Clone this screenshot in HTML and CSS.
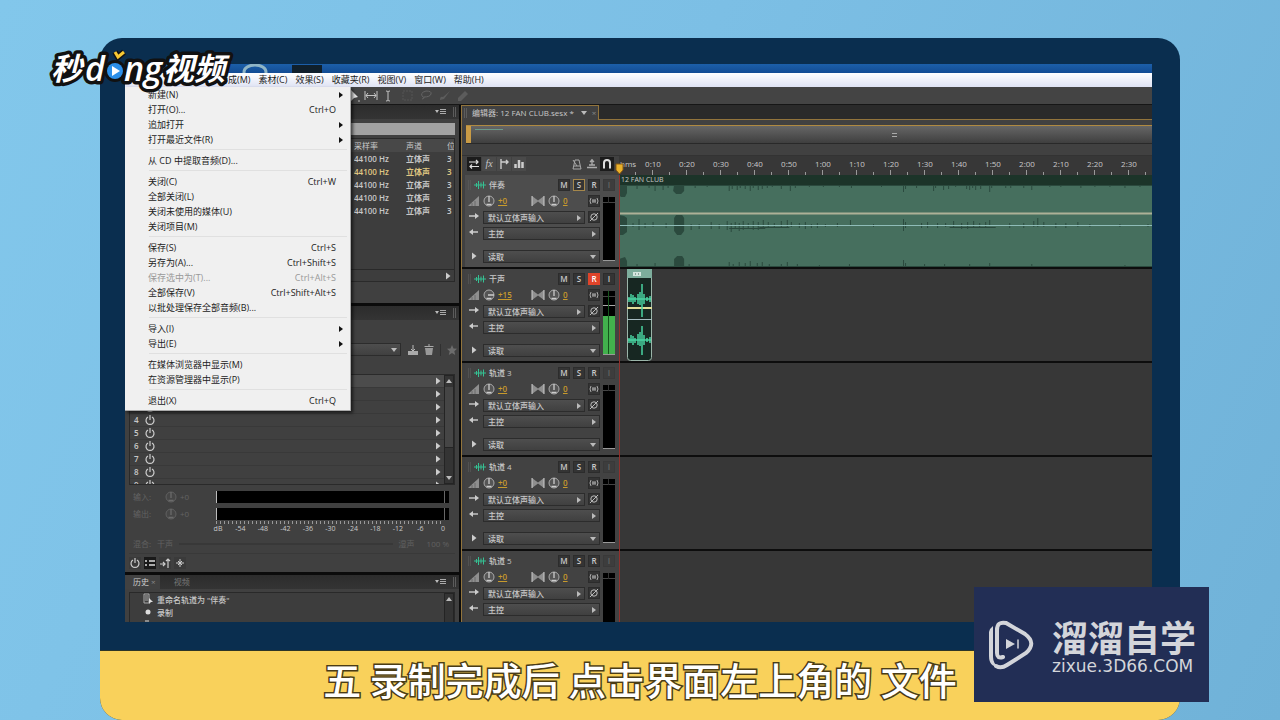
FILE: index.html
```html
<!DOCTYPE html>
<html lang="zh-CN">
<head>
<meta charset="utf-8">
<title>秒dong视频</title>
<link rel="stylesheet" href="styles.css">
</head>
<body>
<svg class="defs" aria-hidden="true">
  <symbol id="wave" viewBox="0 0 12 12"><path d="M0 6h12M2.500 4v4M4.500 2v8M7 3.500v5M9.500 2.500v7" stroke="#35c193" stroke-width="1" fill="none"/></symbol>
  <symbol id="ramp" viewBox="0 0 12 12"><path d="M0 11L11 1v10z" fill="#8f8f8f"/><path d="M4 11V8M7 11V6" stroke="#6a6a6a"/></symbol>
  <symbol id="knob" viewBox="0 0 12 12"><circle cx="6" cy="6" r="5" fill="#555" stroke="#aaa"/><path d="M6 1v6M3.500 9.500h5" stroke="#ccc" stroke-width="1.300"/></symbol>
  <symbol id="knobup" viewBox="0 0 12 12"><circle cx="6" cy="6" r="5" fill="#555" stroke="#aaa"/><path d="M5 6h6M3.500 9.500h5" stroke="#ccc" stroke-width="1.300"/></symbol>
  <symbol id="pan" viewBox="0 0 14 12"><path d="M1 1v10l6-4.500L13 11V1L7 5.500z" fill="#8f8f8f"/><path d="M1 1v10M13 1v10" stroke="#ccc"/></symbol>
  <symbol id="mono" viewBox="0 0 12 12"><path d="M3 3Q1 6 3 9M9 3q2 3 0 6M5 4v4M7 4v4M4 6h4" stroke="#aaa" fill="none"/></symbol>
  <symbol id="phase" viewBox="0 0 12 12"><circle cx="6" cy="6" r="3.200" stroke="#bbb" fill="none"/><path d="M2 10l8-8" stroke="#bbb"/></symbol>
  <symbol id="in" viewBox="0 0 12 12"><path d="M1 5h7" stroke="#ccc" stroke-width="1.400"/><path d="M7 2l4 3-4 3z" fill="#ccc"/></symbol>
  <symbol id="out" viewBox="0 0 12 12"><path d="M10 5H4" stroke="#ccc" stroke-width="1.400"/><path d="M5 2L1 5l4 3z" fill="#ccc"/></symbol>
  <symbol id="tri" viewBox="0 0 12 12"><path d="M4 2.500v7L8.500 6z" fill="#ccc"/></symbol>
  <symbol id="power" viewBox="0 0 12 12"><path d="M4 3a4 4 0 1 0 4 0M6 1v5" stroke="#ccc" stroke-width="1.200" fill="none"/></symbol>
  <symbol id="flyout" viewBox="0 0 12 10"><path d="M0 3h4L2 6z" fill="#bbb"/><path d="M5 2.500h6M5 4.500h6M5 6.500h6" stroke="#aaa"/></symbol>
</svg>

<main class="stage">
  <div class="app">
    <div class="titlebar">
      <svg viewBox="0 0 200 9" width="200" height="9"><ellipse cx="37" cy="8" rx="11" ry="7" fill="none" stroke="#8fb5c6" stroke-width="3"/><path d="M74 1h30v8H74z" fill="#10202c"/></svg>
    </div>
    <nav class="menubar">
      <button>合成(M)</button><button>素材(C)</button><button>效果(S)</button><button>收藏夹(R)</button><button>视图(V)</button><button>窗口(W)</button><button>帮助(H)</button>
    </nav>
    <div class="toolbar">
      <svg viewBox="0 0 130 18" width="130" height="18" fill="none">
        <path d="M1 3l7 7-4 1-3 3z" fill="#e4e4e4"/><path d="M8 14h2" stroke="#bbb"/>
        <path d="M15 4v9M27 4v9M16 8.500h10M18 6l-2 2.500 2 2.500M24 6l2 2.500-2 2.500" stroke="#c4c4c4"/>
        <path d="M36 4q2 0 2 1 0-1 2-1M38 5v8M36 14q2 0 2-1 0 1 2 1" stroke="#c4c4c4"/>
        <path d="M53 4h9v9h-9z" stroke="#555" stroke-dasharray="2 1"/>
        <path d="M72 12q4-1 1-2-4-4 3-6 6 0 5 3-1 3-7 3" stroke="#646464"/>
        <path d="M90 13q0-4 3-3l7-6-6 8z" fill="#5c5c5c"/><path d="M108 11l7-7 3 3-7 7h-3z" fill="#5c5c5c"/>
      </svg>
    </div>

    <div class="workspace">
      <div class="left">
        <section class="panel files">
          <div class="phead"><svg class="fly"><use href="#flyout"/></svg><i class="grip"></i></div>
          <input class="search" type="text" aria-label="搜索">
          <div class="tablebox">
            <table>
              <thead><tr><th class="cname"></th><th class="crate">采样率</th><th class="cch">声道</th><th>位</th></tr></thead>
              <tbody>
                <tr><td></td><td>44100 Hz</td><td>立体声</td><td>3</td></tr>
                <tr class="active"><td></td><td>44100 Hz</td><td>立体声</td><td>3</td></tr>
                <tr><td></td><td>44100 Hz</td><td>立体声</td><td>3</td></tr>
                <tr><td></td><td>44100 Hz</td><td>立体声</td><td>3</td></tr>
                <tr><td></td><td>44100 Hz</td><td>立体声</td><td>3</td></tr>
              </tbody>
            </table>
            <div class="hscroll"><svg class="ic"><use href="#tri"/></svg></div>
          </div>
        </section>

        <section class="panel rack">
          <div class="phead"><svg class="fly"><use href="#flyout"/></svg><i class="grip"></i></div>
          <div class="preset">
            <span class="dd grow down"><select aria-label="预设"><option></option></select></span>
            <svg class="ic" viewBox="0 0 12 12"><path d="M1 7h10v4H1z" fill="#aaa"/><path d="M6 1v6M4 5l2 2 2-2" stroke="#bbb" fill="none"/></svg>
            <svg class="ic" viewBox="0 0 12 12"><path d="M2 4h8l-1 7H3z" fill="#999"/><path d="M1.500 2.500h9M5 1h2" stroke="#aaa"/></svg>
            <i class="divider"></i>
            <svg class="ic" viewBox="0 0 12 12"><path d="M6 1l1.500 3.500 3.500.3-2.700 2.400.9 3.800L6 9l-3.200 2 .9-3.800L1 4.800l3.500-.3z" fill="#6c6c6c"/></svg>
          </div>
          <div class="slots">
            <ol>
              <li class="sel"><span>1</span><svg class="ic"><use href="#power"/></svg><svg class="ic end"><use href="#tri"/></svg></li>
              <li><span>2</span><svg class="ic"><use href="#power"/></svg><svg class="ic end"><use href="#tri"/></svg></li>
              <li><span>3</span><svg class="ic"><use href="#power"/></svg><svg class="ic end"><use href="#tri"/></svg></li>
              <li><span>4</span><svg class="ic"><use href="#power"/></svg><svg class="ic end"><use href="#tri"/></svg></li>
              <li><span>5</span><svg class="ic"><use href="#power"/></svg><svg class="ic end"><use href="#tri"/></svg></li>
              <li><span>6</span><svg class="ic"><use href="#power"/></svg><svg class="ic end"><use href="#tri"/></svg></li>
              <li><span>7</span><svg class="ic"><use href="#power"/></svg><svg class="ic end"><use href="#tri"/></svg></li>
              <li><span>8</span><svg class="ic"><use href="#power"/></svg><svg class="ic end"><use href="#tri"/></svg></li>
              <li><span>9</span><svg class="ic"><use href="#power"/></svg><svg class="ic end"><use href="#tri"/></svg></li>
            </ol>
            <div class="vscroll"><i class="up"></i><i class="thumb"></i><i class="dn"></i></div>
          </div>
          <div class="io"><span class="iolabel">输入:</span><svg class="ic"><use href="#knob"/></svg><span class="ioval">+0</span><div class="bar"></div></div>
          <div class="io"><span class="iolabel">输出:</span><svg class="ic"><use href="#knob"/></svg><span class="ioval">+0</span><div class="bar"></div></div>
          <div class="ticks"></div>
          <div class="scale"><span>dB</span><span>-54</span><span>-48</span><span>-42</span><span>-36</span><span>-30</span><span>-24</span><span>-18</span><span>-12</span><span>-6</span><span>0</span></div>
          <div class="mix"><span>混合:</span><span>干声</span><i></i><span>湿声</span><span class="pct">100 %</span></div>
          <div class="rackbtns">
            <button aria-label="电源"><svg class="ic"><use href="#power"/></svg></button>
            <button class="on" aria-label="列表"><svg class="ic" viewBox="0 0 12 12"><path d="M1 4h2M5 4h6M1 8h2M5 8h6" stroke="#ddd" stroke-width="1.500"/></svg></button>
            <button aria-label="前后"><svg class="ic" viewBox="0 0 12 12"><path d="M1 7h5M4 5l2 2-2 2M9 11V3M7 4l2-2 2 2" stroke="#ccc" fill="none" stroke-width="1.200"/></svg></button>
            <button aria-label="添加"><svg class="ic" viewBox="0 0 12 12"><path d="M6 2v8M2 6h8M4 4l4 4M8 4L4 8" stroke="#ccc"/></svg></button>
          </div>
        </section>

        <section class="panel history">
          <div class="phead tabs"><button class="tab cur">历史 <small>×</small></button><button class="tab">视频</button><svg class="fly"><use href="#flyout"/></svg><i class="grip"></i></div>
          <div class="histbox">
            <ul>
              <li><svg class="ic" viewBox="0 0 12 12"><path d="M2 1h5v9H2zM3 3h3M3 5h3M3 7h3" stroke="#aaa" fill="none"/><path d="M7 5l4 4-2 0-2 2z" fill="#ddd"/></svg>重命名轨道为 "伴奏"</li>
              <li><svg class="ic" viewBox="0 0 12 12"><circle cx="6" cy="6" r="2.500" fill="#ddd"/></svg>录制</li>
              <li><svg class="ic" viewBox="0 0 12 12"><path d="M3 2h4" stroke="#ddd"/></svg></li>
            </ul>
            <div class="vscroll"><i class="up"></i></div>
          </div>
        </section>
      </div>

      <section class="editor">
        <div class="etabs"><div class="etab"><i class="grip"></i><span>编辑器: 12 FAN CLUB.sesx *</span><i class="caret"></i><button aria-label="关闭标签">×</button></div><div class="etabrest"></div></div>
        <div class="overview"><i class="edge"></i><i class="mini"></i><i class="handle"></i></div>
        <div class="timehead">
          <div class="ttools">
            <button class="on" aria-label="输入输出"><svg class="ic" viewBox="0 0 12 12"><path d="M1 4h9M8 2l2 2-2 2M11 8.500H2M4 6.500l-2 2 2 2" stroke="#ddd" fill="none" stroke-width="1.200"/></svg></button>
            <button class="fx">fx</button>
            <button aria-label="发送"><svg class="ic" viewBox="0 0 12 12"><path d="M3 1v10M3 4h7M8 2l2 2-2 2" stroke="#ccc" stroke-width="1.400" fill="none"/></svg></button>
            <button aria-label="均衡"><svg class="ic" viewBox="0 0 12 12"><path d="M2.500 10V6M6 10V2M9.500 10V4" stroke="#ccc" stroke-width="2.500"/></svg></button>
            <span class="grow"></span>
            <button class="flat" aria-label="节拍器"><svg class="ic" viewBox="0 0 12 12"><path d="M2 11l2-9h4l2 9zM3 8h6M6 8L2 2" stroke="#aaa" fill="none"/></svg></button>
            <button class="flat" aria-label="标记"><svg class="ic" viewBox="0 0 12 12"><path d="M1 9.500h10M3 7h6M6 1v6M4 4l2-2 2 2" stroke="#aaa" fill="none" stroke-width="1.400"/></svg></button>
            <button class="on" aria-label="吸附"><svg class="ic" viewBox="0 0 12 12"><path d="M3 10.500V5a3 3 0 0 1 6 0v5.500" stroke="#ddd" stroke-width="2" fill="none"/></svg></button>
          </div>
          <div class="ruler">
            <span class="hms">hms</span>
            <div class="marks"><span>0:10</span><span>0:20</span><span>0:30</span><span>0:40</span><span>0:50</span><span>1:00</span><span>1:10</span><span>1:20</span><span>1:30</span><span>1:40</span><span>1:50</span><span>2:00</span><span>2:10</span><span>2:20</span><span>2:30</span></div>
          </div>
        </div>

        <div class="tracks">
          <article class="track lit">
            <div class="thead">
              <div class="controls">
                <div class="row"><i class="grip"></i><svg class="ic"><use href="#wave"/></svg><b>伴奏</b><span class="grow"></span><button>M</button><button class="solo">S</button><button>R</button></div>
                <div class="row vol"><svg class="ic"><use href="#ramp"/></svg><svg class="ic"><use href="#knob"/></svg><em><u>+0</u></em><svg class="ic wide"><use href="#pan"/></svg><svg class="ic"><use href="#knob"/></svg><em><u>0</u></em><button aria-label="单声道"><svg class="ic"><use href="#mono"/></svg></button></div>
                <div class="row"><svg class="ic"><use href="#in"/></svg><span class="dd grow"><select aria-label="输入"><option>默认立体声输入</option></select></span><button aria-label="反相"><svg class="ic"><use href="#phase"/></svg></button></div>
                <div class="row"><svg class="ic"><use href="#out"/></svg><span class="dd grow"><select aria-label="输出"><option>主控</option></select></span></div>
                <div class="row auto"><svg class="ic"><use href="#tri"/></svg><span class="dd grow down"><select aria-label="自动化"><option>读取</option></select></span></div>
              </div>
              <div class="side"><button class="off">I</button><div class="meter"></div></div>
            </div>
            <div class="lane">
              <div class="clip">
                <div class="cliptitle">12 FAN CLUB</div>
                <svg class="clipwave" viewBox="0 0 532 82" preserveAspectRatio="none">
                  <path d="M0 0h532v82H0z" fill="#466f5e"/>
                  <path fill="#2b4a3e" d="M0 0h8v8l-2 4H2L0 10zM55 0h10v6l-3 3h-5l-3-3zM0 30l5 1 3 2v14l-4 3H0zM55 33l2-3h6l2 3v13l-3 4h-4l-3-4zM0 82V74l6-2 2 4v6zM55 82v-8l3-3h5l2 3v8z"/>
                  <path stroke="#2b4a3e" fill="none" d="M0 .5h532M18 0v4M30 0v3M36 0v6M44 0v5M49 0v3M76 0v3M88 0v2M110 0v6M113 0v4M118 0v5M121 0v3M126 0v4M131 0v6M134 0v3M139 0v5M143 0v4M148 0v3M153 0v2M162 0v4M171 0v6M176 0v3M190 0v2M204 0v2M220 0v2M232 0v3M262 0v2M284 0v7M286 0v4M297 0v3M314 0v6M316 0v3M324 0v5M329 0v4M336 0v2M347 0v4M350 0v5M353 0v3M356 0v5M361 0v4M370 0v7M372 0v3M386 0v3M391 0v3M404 0v3M412 0v5M430 0v2M441 0v2M461 0v3M475 0v2M490 0v2M505 0v3M520 0v2"/>
                  <path stroke="#2b4a3e" fill="none" d="M8 40.500h524M14 38v4M20 34v11M26 38v5M34 37v5M47 38v5M72 39v6M80 39v5M92 37v7M100 39v5M108 36v9M112 38v9M116 37v7M120 38v8M124 36v9M129 38v6M134 36v9M139 37v8M144 35v9M149 37v6M155 38v4M162 36v6M168 35v8M172 37v5M180 38v5M186 37v7M192 39v4M198 38v5M206 39v3M218 38v4M231 35v6M254 39v3M284 34v12M286 37v6M302 38v5M308 37v6M318 38v5M326 38v4M334 36v6M342 38v6M348 37v7M354 36v7M360 38v5M366 37v6M370 35v6M390 38v5M404 38v5M414 36v6M418 33v9M424 37v5M436 38v5M446 38v5M458 37v5M470 39v3M500 39v3M528 39v3"/>
                  <path stroke="#2b4a3e" d="M140 42.500h30M330 42.500h46M110 43.500h36M0 81.500h532M18 82v-3M36 82v-4M70 82v-3M110 82v-5M114 82v-3M120 82v-5M126 82v-4M131 82v-6M138 82v-4M143 82v-5M150 82v-3M162 82v-3M168 82v-5M178 82v-3M200 82v-2M230 82v-3M284 82v-7M286 82v-4M305 82v-3M325 82v-3M350 82v-3M370 82v-4M412 82v-3M505 82v-2"/>
                  <path d="M0 28.500h532" stroke="#adb197" stroke-width="2"/>
                  <path d="M0 40.500h532" stroke="#8fbcb8"/>
                </svg>
              </div>
            </div>
          </article>

          <article class="track">
            <div class="thead">
              <div class="controls">
                <div class="row"><i class="grip"></i><svg class="ic"><use href="#wave"/></svg><b>干声</b><span class="grow"></span><button>M</button><button>S</button><button class="rec">R</button></div>
                <div class="row vol"><svg class="ic"><use href="#ramp"/></svg><svg class="ic"><use href="#knobup"/></svg><em><u>+15</u></em><svg class="ic wide"><use href="#pan"/></svg><svg class="ic"><use href="#knob"/></svg><em><u>0</u></em><button aria-label="单声道"><svg class="ic"><use href="#mono"/></svg></button></div>
                <div class="row"><svg class="ic"><use href="#in"/></svg><span class="dd grow"><select aria-label="输入"><option>默认立体声输入</option></select></span><button aria-label="反相"><svg class="ic"><use href="#phase"/></svg></button></div>
                <div class="row"><svg class="ic"><use href="#out"/></svg><span class="dd grow"><select aria-label="输出"><option>主控</option></select></span></div>
                <div class="row auto"><svg class="ic"><use href="#tri"/></svg><span class="dd grow down"><select aria-label="自动化"><option>读取</option></select></span></div>
              </div>
              <div class="side"><button>I</button><div class="meter live"></div></div>
            </div>
            <div class="lane">
              <svg class="voice" viewBox="0 0 25 92" width="25" height="92">
                <rect x=".5" y=".5" width="24" height="91" rx="3" fill="#172722" stroke="#9bb5a9"/>
                <path d="M0 0h25v9H0z" fill="#7dad9c"/><path d="M6 3h8v4H6z" fill="#d5e6df"/><path d="M8 5h1M11 5h1" stroke="#44675a"/>
                <path d="M0 39h25" stroke="#e2dd98" stroke-width="2"/><path d="M0 50.500h25" stroke="#a7bdc2"/>
                <path d="M1 30h23M2 28v5M4 25v8M6 26v9M8 28v5M11 25v10M13 23v13M15 15v33M17 25v10M20 28v4M23 27v6M1 71h23M2 69v5M4 66v8M6 67v9M8 69v5M11 65v11M13 63v14M15 57v29M17 66v10M20 69v4M23 68v6" stroke="#49d3a1" stroke-width="1.500"/>
              </svg>
            </div>
          </article>

          <article class="track">
            <div class="thead">
              <div class="controls">
                <div class="row"><i class="grip"></i><svg class="ic"><use href="#wave"/></svg><b>轨道 3</b><span class="grow"></span><button>M</button><button>S</button><button>R</button></div>
                <div class="row vol"><svg class="ic"><use href="#ramp"/></svg><svg class="ic"><use href="#knob"/></svg><em><u>+0</u></em><svg class="ic wide"><use href="#pan"/></svg><svg class="ic"><use href="#knob"/></svg><em><u>0</u></em><button aria-label="单声道"><svg class="ic"><use href="#mono"/></svg></button></div>
                <div class="row"><svg class="ic"><use href="#in"/></svg><span class="dd grow"><select aria-label="输入"><option>默认立体声输入</option></select></span><button aria-label="反相"><svg class="ic"><use href="#phase"/></svg></button></div>
                <div class="row"><svg class="ic"><use href="#out"/></svg><span class="dd grow"><select aria-label="输出"><option>主控</option></select></span></div>
                <div class="row auto"><svg class="ic"><use href="#tri"/></svg><span class="dd grow down"><select aria-label="自动化"><option>读取</option></select></span></div>
              </div>
              <div class="side"><button class="off">I</button><div class="meter"></div></div>
            </div>
            <div class="lane"></div>
          </article>

          <article class="track">
            <div class="thead">
              <div class="controls">
                <div class="row"><i class="grip"></i><svg class="ic"><use href="#wave"/></svg><b>轨道 4</b><span class="grow"></span><button>M</button><button>S</button><button>R</button></div>
                <div class="row vol"><svg class="ic"><use href="#ramp"/></svg><svg class="ic"><use href="#knob"/></svg><em><u>+0</u></em><svg class="ic wide"><use href="#pan"/></svg><svg class="ic"><use href="#knob"/></svg><em><u>0</u></em><button aria-label="单声道"><svg class="ic"><use href="#mono"/></svg></button></div>
                <div class="row"><svg class="ic"><use href="#in"/></svg><span class="dd grow"><select aria-label="输入"><option>默认立体声输入</option></select></span><button aria-label="反相"><svg class="ic"><use href="#phase"/></svg></button></div>
                <div class="row"><svg class="ic"><use href="#out"/></svg><span class="dd grow"><select aria-label="输出"><option>主控</option></select></span></div>
                <div class="row auto"><svg class="ic"><use href="#tri"/></svg><span class="dd grow down"><select aria-label="自动化"><option>读取</option></select></span></div>
              </div>
              <div class="side"><button class="off">I</button><div class="meter"></div></div>
            </div>
            <div class="lane"></div>
          </article>

          <article class="track">
            <div class="thead">
              <div class="controls">
                <div class="row"><i class="grip"></i><svg class="ic"><use href="#wave"/></svg><b>轨道 5</b><span class="grow"></span><button>M</button><button>S</button><button>R</button></div>
                <div class="row vol"><svg class="ic"><use href="#ramp"/></svg><svg class="ic"><use href="#knob"/></svg><em><u>+0</u></em><svg class="ic wide"><use href="#pan"/></svg><svg class="ic"><use href="#knob"/></svg><em><u>0</u></em><button aria-label="单声道"><svg class="ic"><use href="#mono"/></svg></button></div>
                <div class="row"><svg class="ic"><use href="#in"/></svg><span class="dd grow"><select aria-label="输入"><option>默认立体声输入</option></select></span><button aria-label="反相"><svg class="ic"><use href="#phase"/></svg></button></div>
                <div class="row"><svg class="ic"><use href="#out"/></svg><span class="dd grow"><select aria-label="输出"><option>主控</option></select></span></div>
              </div>
              <div class="side"><button class="off">I</button><div class="meter"></div></div>
            </div>
            <div class="lane"></div>
          </article>
          <div class="playhead"><svg viewBox="0 0 9 12" width="9" height="12"><path d="M1 1h7v6l-3.500 4L1 7z" fill="#e9b12c" stroke="#8a5a10"/></svg><i></i></div>
        </div>
      </section>
    </div>

    <div class="filemenu" role="menu">
      <button role="menuitem">新建(N)<i class="sub"></i></button>
      <button role="menuitem">打开(O)...<kbd>Ctrl+O</kbd></button>
      <button role="menuitem">追加打开<i class="sub"></i></button>
      <button role="menuitem">打开最近文件(R)<i class="sub"></i></button>
      <hr>
      <button role="menuitem">从 CD 中提取音频(D)...</button>
      <hr>
      <button role="menuitem">关闭(C)<kbd>Ctrl+W</kbd></button>
      <button role="menuitem">全部关闭(L)</button>
      <button role="menuitem">关闭未使用的媒体(U)</button>
      <button role="menuitem">关闭项目(M)</button>
      <hr>
      <button role="menuitem">保存(S)<kbd>Ctrl+S</kbd></button>
      <button role="menuitem">另存为(A)...<kbd>Ctrl+Shift+S</kbd></button>
      <button role="menuitem" disabled>保存选中为(T)...<kbd>Ctrl+Alt+S</kbd></button>
      <button role="menuitem">全部保存(V)<kbd>Ctrl+Shift+Alt+S</kbd></button>
      <button role="menuitem">以批处理保存全部音频(B)...</button>
      <hr>
      <button role="menuitem">导入(I)<i class="sub"></i></button>
      <button role="menuitem">导出(E)<i class="sub"></i></button>
      <hr>
      <button role="menuitem">在媒体浏览器中显示(M)</button>
      <button role="menuitem">在资源管理器中显示(P)</button>
      <hr>
      <button role="menuitem">退出(X)<kbd>Ctrl+Q</kbd></button>
    </div>
  </div>
  <p class="caption">五 录制完成后 点击界面左上角的 文件</p>
</main>

<svg class="brand" viewBox="0 0 190 52" width="190" height="52">
  <g class="brandtext">
    <text x="5" y="36" class="han">秒</text>
    <text x="39" y="37" class="lat">d</text>
    <text x="78" y="37" class="lat">ng</text>
    <text x="117" y="36" class="han">视频</text>
  </g>
  <circle cx="69" cy="27" r="11" fill="#111"/><circle cx="69" cy="27" r="8" fill="#2c8fe8"/><path d="M66 22v10l8-5z" fill="#fff"/>
  <path d="M69 8l3 5 6-5" fill="none" stroke="#111" stroke-width="6"/><path d="M69 8l3 5 6-5" fill="none" stroke="#f7c933" stroke-width="3"/>
</svg>

<aside class="watermark">
  <svg viewBox="0 0 48 50" width="48" height="50" fill="none" stroke="#d3d5da" stroke-linecap="round">
    <path d="M2 12Q3 8 6 6v31q0 7 6 10Q2 47 2 36z" fill="#d3d5da" stroke="none"/>
    <path d="M16 37q-6 2-6-4V10q0-9 9-7L38 14q12 9 1 19L20 45q-6 4-11 1" stroke-width="4"/>
    <path d="M19 19v10l9-5z" fill="#d3d5da" stroke="none"/><path d="M31 20v8" stroke-width="1.500"/>
  </svg>
  <div class="wmtext"><strong>溜溜自学</strong><span>zixue.3D66.COM</span></div>
</aside>
</body>
</html>
```

FILE: styles.css
```css
* { box-sizing: border-box; }
body {
  margin: 0;
  background: linear-gradient(115deg, #82c7eb, #7cbfe5 45%, #70b2d8);
  font: 8px/12px "Open Sans", "Noto Sans CJK SC", sans-serif;
  color: #c8c8c8;
}
button, select, input, kbd { font: inherit; color: inherit; margin: 0; padding: 0; border: 0; background: none; }
ul, ol { margin: 0; padding: 0; list-style: none; }
i, em { font-style: normal; }
.defs { position: absolute; width: 0; height: 0; }
.ic { width: 12px; height: 12px; flex: none; display: block; }
.grow { flex: 1; }

.stage {
  height: calc(100vh - 38px);
  margin: 38px 100px 0;
  padding: 26px 0 0;
  display: flex;
  flex-direction: column;
  background: #0a2e4f;
  border-radius: 22px;
  overflow: hidden;
}
.app {
  position: relative;
  flex: 1;
  min-height: 0;
  margin: 0 28px 28px 25px;
  display: flex;
  flex-direction: column;
  overflow: hidden;
  background: #404040;
}
.caption {
  flex: none;
  margin: 0;
  height: 70px;
  border-top: 1px solid #2d3527;
  background: #f9d15b;
  color: #fff;
  font: 500 38px/56px "Noto Sans CJK SC", sans-serif;
  text-align: center;
  -webkit-text-stroke: 3px #4a3c16;
  paint-order: stroke fill;
}

.titlebar { height: 9px; flex: none; padding-left: 93px; background: linear-gradient(#1c5fa9, #124c94); overflow: hidden; }
.titlebar svg { display: block; }
.menubar {
  flex: none;
  height: 14px;
  padding-left: 94px;
  display: flex;
  gap: 8px;
  background: linear-gradient(#fff, #dfe3f4);
  color: #222;
  font-size: 9px;
  line-height: 14px;
}
.toolbar { flex: none; height: 18px; padding-left: 225px; background: #444; border-bottom: 1px solid #161616; }
.toolbar svg { display: block; }

.workspace { flex: 1; min-height: 0; display: flex; gap: 2px; background: #0b0b0b; }
.left { width: 334px; flex: none; display: flex; flex-direction: column; gap: 3px; min-height: 0; }
.panel { background: #404040; display: flex; flex-direction: column; }
.phead { height: 14px; flex: none; display: flex; align-items: center; justify-content: flex-end; gap: 6px; padding-right: 3px; background: linear-gradient(#2c2c2c, #343434); }
.fly { width: 12px; height: 10px; }
.grip { width: 3px; height: 10px; flex: none; border: solid #5c5c5c; border-width: 0 1px; }

.files { height: 198px; flex: none; }
.search { flex: none; height: 12px; margin: 4px 4px 3px; background: #a2a2a2; }
.tablebox { margin: 0 4px; height: 144px; display: flex; flex-direction: column; justify-content: space-between; background: #3d3d3d; border: 1px solid #2a2a2a; }
table { width: 100%; border-collapse: collapse; table-layout: fixed; font-weight: 600; }
th, td { padding: 0; height: 13px; line-height: 13px; text-align: left; white-space: nowrap; overflow: hidden; }
th { background: #484848; font-weight: 400; }
.cname { width: 224px; }
.crate { width: 52px; }
.cch { width: 41px; }
.active { color: #e0c882; }
.hscroll { height: 12px; display: flex; justify-content: flex-end; border-top: 1px solid #292929; }

.rack { height: 266px; flex: none; }
.preset { margin: 23px 1px 18px 4px; height: 13px; display: flex; align-items: center; gap: 4px; }
.preset .dd { margin-right: 2px; }
.divider { width: 1px; height: 12px; margin: 0 1px; background: #303030; }
.dd { position: relative; height: 13px; display: flex; border: 1px solid #2c2c2c; background: linear-gradient(#4e4e4e, #404040); min-width: 0; }
.dd select { appearance: none; width: 100%; padding: 0 4px; font-weight: 500; line-height: 11px; }
.dd::after { content: ""; position: absolute; right: 3px; top: 3px; border: 3px solid transparent; border-left: 4px solid #bbb; border-right: 0; pointer-events: none; }
.dd.down::after { top: 4px; border: 3px solid transparent; border-top: 4px solid #bbb; border-bottom: 0; }
.slots { margin: 0 4px 6px; height: 112px; display: flex; overflow: hidden; border: 1px solid #2a2a2a; }
.slots ol { flex: 1; }
.slots li { height: 13px; display: flex; align-items: center; gap: 4px; padding: 0 0 0 4px; border-bottom: 1px solid #393939; line-height: 12px; font-weight: 600; }
.slots li.sel { background: #4c4c4c; }
.slots span { width: 6px; }
.end { margin-left: auto; }
.vscroll { width: 10px; flex: none; display: flex; flex-direction: column; align-items: center; background: #343434; border: 1px solid #242424; padding: 3px 0; }
.up { border: 3px solid transparent; border-bottom: 4px solid #bbb; border-top: 0; }
.dn { border: 3px solid transparent; border-top: 4px solid #bbb; border-bottom: 0; }
.thumb { flex: 1; width: 8px; margin: 4px 0 28px; background: #454545; border-bottom: 1px solid #242424; }
.io { height: 12px; flex: none; margin: 0 10px 5px 8px; display: flex; align-items: center; color: #636363; }
.io .ic { opacity: .3; }
.iolabel { width: 32px; }
.ioval { width: 39px; padding-left: 3px; }
.bar { flex: 1; height: 12px; background: linear-gradient(90deg, transparent 227px, #666 227px 228px, transparent 228px), #000; border-left: 1px solid #bbb; }
.ticks { height: 3px; flex: none; margin: -4px 15px 0 91px; background: repeating-linear-gradient(90deg, #999 0 1px, transparent 1px 4px); }
.scale { flex: none; height: 10px; line-height: 10px; font-size: 7px; margin: 0 7px 0 84px; display: flex; justify-content: space-between; }
.scale span { width: 18px; text-align: center; }
.mix { flex: none; height: 12px; margin: 4px 10px 3px 8px; display: flex; align-items: center; gap: 6px; color: #606060; }
.mix i { flex: 1; height: 2px; background: #383838; }
.pct { padding-left: 6px; }
.rackbtns { display: flex; gap: 3px; padding: 3px 0; margin: 0 4px; border-top: 1px solid #393939; }
.rackbtns button { background: #3a3a3a; }
.rackbtns .on { background: #191919; }
.history { flex: 1; min-height: 0; overflow: hidden; }
.tabs { gap: 6px; }
.tab { height: 14px; padding: 0 4px 0 8px; color: #777; }
.tab.cur { background: #414141; color: #ccc; }
.tab small { font-size: 8px; color: #888; }
.tabs .fly { margin-left: auto; }
.histbox { flex: 1; min-height: 60px; margin: 3px 4px 0; display: flex; border: 1px solid #292929; background: #3d3d3d; }
.histbox ul { flex: 1; padding: 0 12px; font-weight: 500; }
.histbox li { height: 13px; display: flex; gap: 3px; line-height: 13px; }

.editor { flex: 1; min-width: 0; display: flex; flex-direction: column; background: #414141; border-left: 1px solid #92743c; }
.etabs { height: 15px; flex: none; display: flex; }
.etab { display: flex; align-items: center; gap: 5px; padding: 0 2px; border: solid #92743c; border-width: 1px 1px 0 0; background: #414141; }
.etab button { color: #888; }
.caret { margin-left: 2px; border: 3px solid transparent; border-top: 4px solid #bbb; border-bottom: 0; }
.etabrest { flex: 1; background: #2a2a2a; border-bottom: 1px solid #92743c; }
.overview { height: 19px; flex: none; position: relative; margin: 5px 0 11px 4px; background: linear-gradient(#666, #3f3f3f); border: solid #b08a41; border-width: 1px 0 0; border-bottom: 1px solid #292929; display: flex; align-items: center; justify-content: center; }
.edge { position: absolute; left: 0; top: 0; width: 5px; height: 100%; background: #c99b45; }
.mini { position: absolute; left: 9px; top: 3px; width: 28px; height: 1px; background: #6c9a89; }
.handle { width: 5px; height: 4px; margin-left: 170px; border: solid #aaa; border-width: 1px 0; }
.timehead { height: 20px; flex: none; display: flex; border-top: 1px solid #333; }
.ttools { width: 157px; flex: none; display: flex; align-items: center; gap: 1px; padding: 0 5px 3px 5px; }
.ttools button { width: 14px; height: 14px; display: flex; align-items: center; justify-content: center; background: #4a4a4a; }
.ttools .on { background: #1c1c1c; }
.ttools .flat { background: none; }
.ttools .fx { font: italic 10px/12px "Liberation Serif", serif; }
.ruler { flex: 1; min-width: 0; display: flex; overflow: hidden; position: relative; background: repeating-linear-gradient(90deg, transparent 0 16px, #999 16px 17px, transparent 17px 34px) 0 100% / 100% 3px no-repeat, repeating-linear-gradient(90deg, transparent 0 33px, #999 33px 34px) 0 100% / 100% 5px no-repeat, #373737; }
.hms { position: absolute; left: 1px; top: 2px; }
.marks { display: flex; padding: 2px 0 0 17px; }
.marks span { width: 34px; flex: none; text-align: center; }

.tracks { flex: 1; min-height: 0; position: relative; }
.track { height: 94px; display: flex; border-bottom: 2px solid #0d0d0d; }
.thead { width: 157px; flex: none; display: flex; gap: 3px; padding: 3px 4px 0 3px; border-left: 3px solid #404040; background: #424242; }
.lit .thead { background: #4d4d4d; }
.lane { flex: 1; min-width: 0; background: #373737; }
.controls { flex: 1; min-width: 0; display: flex; flex-direction: column; gap: 2px; }
.row { height: 14px; display: flex; align-items: center; gap: 3px; }
.row b { font-weight: 500; }
.row .grip { opacity: .6; }
.row button, .side button { width: 12px; height: 12px; flex: none; display: flex; align-items: center; justify-content: center; background: #343434; border: 1px solid #2c2c2c; font-weight: 600; line-height: 10px; }
.row .solo { border-color: #a5874b; }
.row .rec { background: #e0442a; border-color: #e0442a; color: #fff; }
.side .off { color: #666; background: #3d3d3d; border-color: #393939; }
.vol em { width: 30px; color: #c89a2c; font-weight: 600; }
.vol .wide { width: 14px; }
.vol .wide + .ic + em { flex: 1; width: auto; }
.auto { margin-top: 7px; }
.side { width: 12px; flex: none; }
.side button { margin-top: 1px; }
.meter { height: 64px; margin-top: 6px; border-bottom: 1px solid #999; background: linear-gradient(90deg, transparent 5px, #333 5px 6px, transparent 6px) 0 0 / 100% 6px no-repeat, linear-gradient(#000 5px, #444 5px 6px, #000 6px); }
.meter.live { background: linear-gradient(90deg, transparent 5px, #16551d 5px 6px, transparent 6px), linear-gradient(#000 5px, #444 5px 6px, #000 6px 14px, #aaa 14px 15px, #000 15px 25px, #42b14d 25px); }
.clip { height: 92px; display: flex; flex-direction: column; }
.cliptitle { height: 10px; flex: none; padding-left: 2px; line-height: 10px; font-size: 7px; background: #1c3429; }
.clipwave { display: block; width: 100%; height: 82px; }
.voice { display: block; margin-left: 8px; }
.playhead { position: absolute; left: 153px; top: -12px; bottom: 0; width: 9px; display: flex; flex-direction: column; align-items: center; }
.playhead svg { display: block; flex: none; }
.playhead i { flex: 1; width: 1px; background: #93302c; }

.filemenu {
  position: absolute;
  left: 0;
  top: 23px;
  width: 226px;
  padding: 0 1px 2px;
  display: flex;
  flex-direction: column;
  background: #f0f0f0;
  border: solid #aaa;
  border-width: 0 1px 1px 0;
  box-shadow: 2px 2px 3px #0009;
  color: #222;
  font-size: 9px;
}
.filemenu button { height: 15px; padding: 0 13px 0 22px; display: flex; align-items: center; justify-content: space-between; text-align: left; line-height: 15px; }
.filemenu button:disabled { color: #999; }
.filemenu hr { width: 198px; height: 1px; margin: 2px 2px 3px auto; border: 0; background: #e0e0e0; }
.sub { margin-right: -7px; border: 3px solid transparent; border-left: 4px solid #111; border-right: 0; }

.brand { position: absolute; left: 46px; top: 44px; }
.brandtext { fill: #fff; stroke: #111; stroke-width: 7px; stroke-linejoin: round; paint-order: stroke; }
.han { font: italic 700 31px "Noto Sans CJK SC", sans-serif; }
.lat { font: italic 600 34px "Open Sans", sans-serif; }

.watermark {
  position: absolute;
  right: 71px;
  bottom: 18px;
  width: 235px;
  height: 115px;
  padding-left: 13px;
  display: flex;
  align-items: center;
  gap: 17px;
  background: #222e55;
  color: #d3d5da;
}
.wmtext { display: flex; flex-direction: column; padding-bottom: 2px; }
.wmtext strong { font: 700 36px/44px "Noto Sans CJK SC", sans-serif; }
.wmtext span { font: 17px/16px "DejaVu Sans", sans-serif; }
```
